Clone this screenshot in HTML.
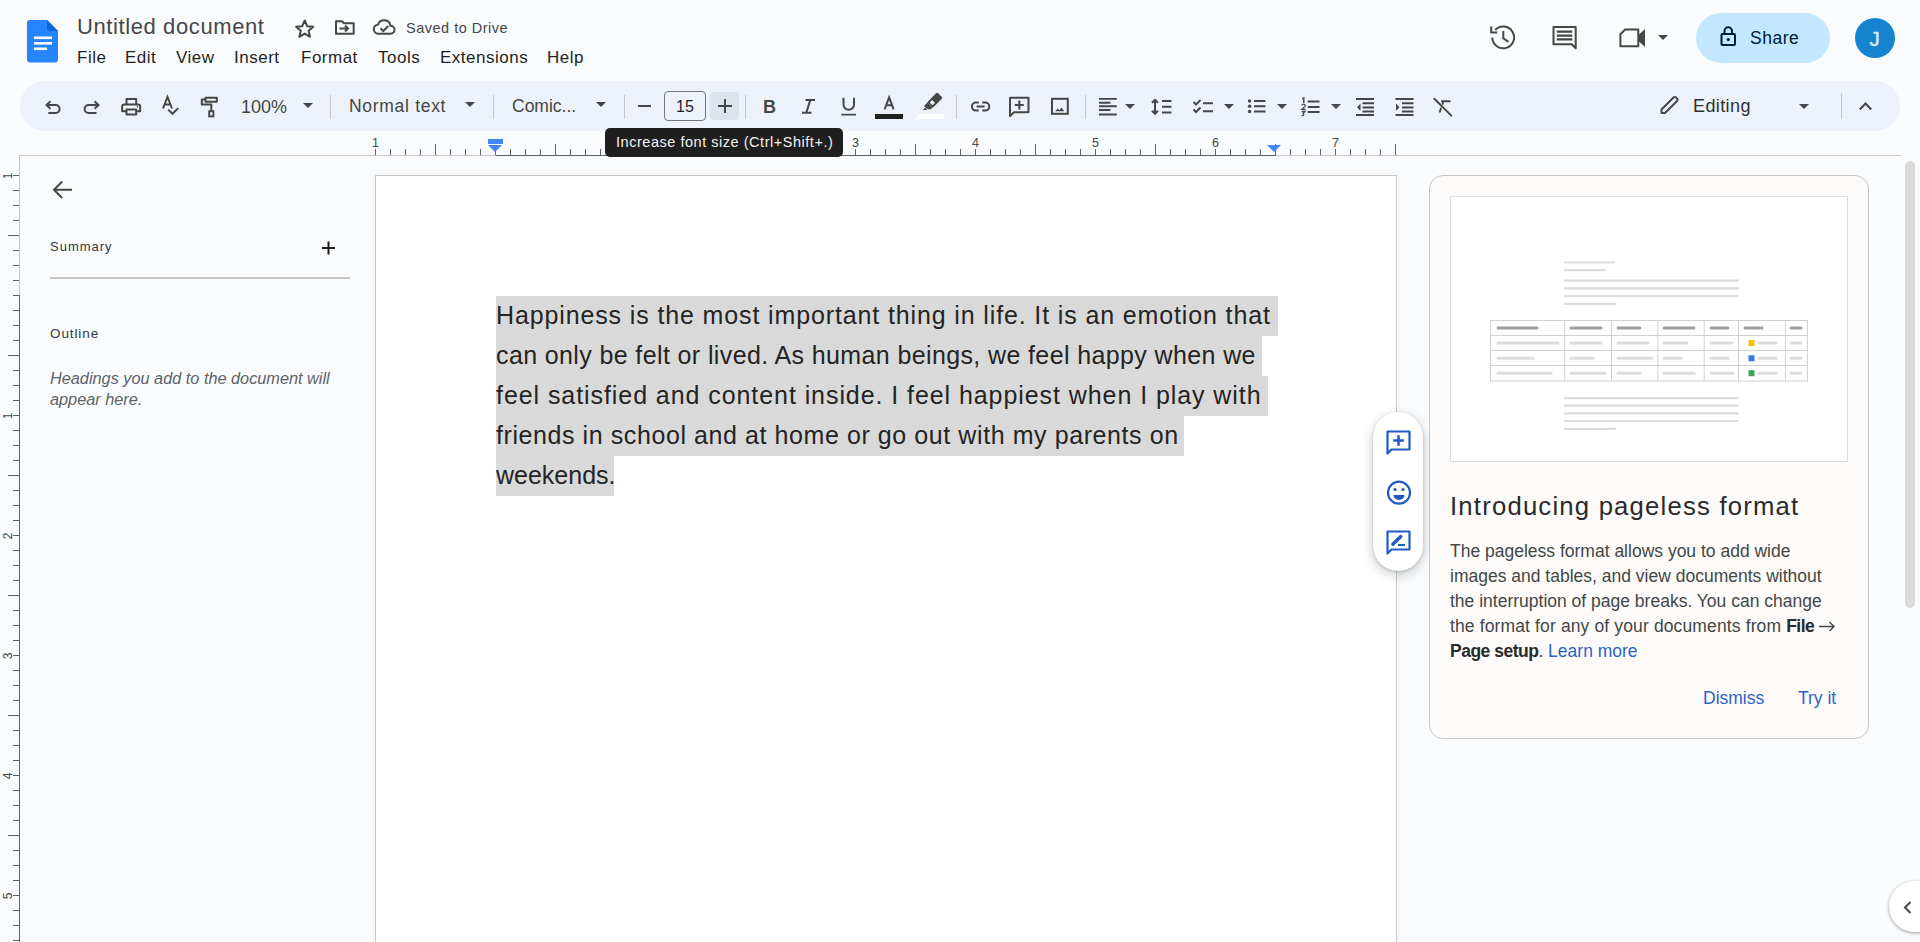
<!DOCTYPE html>
<html><head><meta charset="utf-8">
<style>
*{box-sizing:border-box;margin:0;padding:0}
html,body{width:1920px;height:942px;overflow:hidden;background:#f9fbfd;font-family:"Liberation Sans",sans-serif;color:#1f1f1f}
.a{position:absolute}
svg{position:absolute;overflow:visible}
.t{position:absolute;white-space:nowrap;line-height:1}
.sep{position:absolute;width:1px;background:#c7c7c7;top:95px;height:24px}
.dd{position:absolute;width:0;height:0;border-left:5px solid transparent;border-right:5px solid transparent;border-top:5px solid #444746}
.ic{fill:none;stroke:#444746;stroke-width:2}
.menu{top:49px;font-size:17px;color:#1f1f1f;letter-spacing:0.5px}
.tb{font-size:17px;color:#444746}
</style></head>
<body>
<!-- ===== HEADER ===== -->
<svg style="left:27px;top:20px" width="32" height="43" viewBox="0 0 32 43">
  <path d="M3 0H20L31 11V39.5A3 3 0 0 1 28 42.5H3A3 3 0 0 1 0 39.5V3A3 3 0 0 1 3 0Z" fill="#2684fc"/>
  <path d="M20 0L31 11H23A3 3 0 0 1 20 8Z" fill="#0066da"/>
  <rect x="7" y="16.5" width="18" height="2.6" fill="#fff"/>
  <rect x="7" y="22" width="18" height="2.6" fill="#fff"/>
  <rect x="7" y="27.5" width="13" height="2.6" fill="#fff"/>
</svg>
<div class="t" style="left:77px;top:16px;font-size:22px;color:#474747;letter-spacing:0.6px">Untitled document</div>
<!-- star -->
<svg style="left:0;top:0" width="1" height="1"><path class="ic" d="M304.7 20.5L307.2 26.2L313.3 26.7L308.6 30.8L310 36.8L304.7 33.6L299.4 36.8L300.8 30.8L296.1 26.7L302.2 26.2Z" stroke-width="2" stroke-linejoin="round"/></svg>
<!-- folder move -->
<svg style="left:0;top:0" width="1" height="1"><path class="ic" d="M336 21.3H342L344 23.3H353.7V33.7H336Z" stroke-width="1.8" stroke-linejoin="round"/><path class="ic" d="M339.5 28.5H348M345 25.5L348 28.5L345 31.5" stroke-width="1.8"/></svg>
<!-- cloud done -->
<svg style="left:0;top:0" width="1" height="1"><path class="ic" d="M379 33.7H390.5A4 4 0 0 0 390.5 25.7A6.5 6.5 0 0 0 378 24.5A4.6 4.6 0 0 0 379 33.7Z" stroke-width="2"/><path class="ic" d="M380.5 28.3L383.3 31L388.3 26" stroke-width="1.8"/></svg>
<div class="t" style="left:406px;top:21px;font-size:14.5px;color:#444746;letter-spacing:0.5px">Saved to Drive</div>

<div class="t menu" style="left:77px">File</div>
<div class="t menu" style="left:125px">Edit</div>
<div class="t menu" style="left:176px">View</div>
<div class="t menu" style="left:234px">Insert</div>
<div class="t menu" style="left:301px">Format</div>
<div class="t menu" style="left:378px">Tools</div>
<div class="t menu" style="left:440px">Extensions</div>
<div class="t menu" style="left:547px">Help</div>

<!-- history -->
<svg style="left:0;top:0" width="1" height="1">
 <path class="ic" d="M1492.3 37.6A10.9 10.9 0 1 0 1495.2 30" stroke-width="2.5"/>
 <path class="ic" d="M1491.2 26.6V32.6H1497.2" stroke-width="2.5"/>
 <path class="ic" d="M1503.3 31V38.3L1508.5 41.8" stroke-width="2.5"/>
</svg>
<!-- comments -->
<svg style="left:0;top:0" width="1" height="1">
 <path class="ic" d="M1553.5 26.9H1575.7V48.2L1571.8 44.2H1553.5Z" stroke-width="2.5" stroke-linejoin="round"/>
 <path d="M1556.8 30.5H1572.3V32.8H1556.8ZM1556.8 34.4H1572.3V36.7H1556.8ZM1556.8 38.3H1572.3V40.6H1556.8Z" fill="#444746"/>
</svg>
<!-- meet -->
<svg style="left:0;top:0" width="1" height="1">
 <path class="ic" d="M1625 29.6H1638.3V46.3H1620.4V34.2Z" stroke-width="2.5" stroke-linejoin="round"/>
 <path d="M1638 35.5L1645 29V47L1638 40.5Z" fill="#444746"/>
</svg>
<div class="dd" style="left:1658px;top:35px"></div>
<!-- share -->
<div class="a" style="left:1696px;top:12.5px;width:134px;height:50px;border-radius:25px;background:#c2e7ff"></div>
<svg style="left:0;top:0" width="1" height="1">
 <rect x="1721.5" y="34" width="13.5" height="11" rx="1" class="ic" stroke="#001d35" style="stroke:#001d35" stroke-width="2"/>
 <path d="M1724.5 34V31A3.75 3.75 0 0 1 1732 31V34" class="ic" style="stroke:#001d35" stroke-width="2"/>
 <circle cx="1728.3" cy="39.5" r="1.6" fill="#001d35"/>
</svg>
<div class="t" style="left:1750px;top:29.5px;font-size:17.5px;color:#001d35;letter-spacing:0.5px">Share</div>
<div class="a" style="left:1855px;top:18px;width:40px;height:40px;border-radius:50%;background:#1683d0"></div>
<div class="t" style="left:1869.5px;top:29px;font-size:20.5px;color:#d3ebfb;-webkit-text-stroke:0.5px #d3ebfb">J</div>

<!-- ===== TOOLBAR ===== -->
<div class="a" style="left:20px;top:81px;width:1880px;height:50px;border-radius:25px;background:#edf2fa"></div>
<!-- undo -->
<svg style="left:0;top:0" width="1" height="1"><path class="ic" d="M50.4 101.2L46.5 105L50.4 108.8M46.5 105H55.6A4 4 0 0 1 55.6 113H48.3" stroke-width="1.9"/></svg>
<!-- redo -->
<svg style="left:0;top:0" width="1" height="1"><path class="ic" d="M94.6 101.2L98.5 105L94.6 108.8M98.5 105H88.6A4 4 0 0 0 88.6 113H96.5" stroke-width="1.9"/></svg>
<!-- print -->
<svg style="left:0;top:0" width="1" height="1">
 <path class="ic" d="M126.5 104.4V99H136.2V104.4M126.5 111.3H122.2V106.4A2 2 0 0 1 124.2 104.4H138.2A2 2 0 0 1 140.2 106.4V111.3H136.2M126.5 109.6H136.2V114.4H126.5Z" stroke-width="1.9" stroke-linejoin="round"/>
 <circle cx="137.5" cy="106.8" r="0.8" fill="#444746"/>
</svg>
<!-- spellcheck -->
<svg style="left:0;top:0" width="1" height="1">
 <path class="ic" d="M163 108.5L167.5 97L172 108.5M164.5 104.5H170.5" stroke-width="1.8"/>
 <path class="ic" d="M168.2 109.6L172.5 113.8L178.2 108.1" stroke-width="1.9"/>
</svg>
<!-- paint format -->
<svg style="left:0;top:0" width="1" height="1">
 <path class="ic" d="M205.5 97.7H216.8V101.7H205.5Z M205.5 99.6H201.8V104.5H211.3V111" stroke-width="1.9" stroke-linejoin="round"/>
 <rect x="209.2" y="111.2" width="4.2" height="5.2" fill="none" stroke="#444746" stroke-width="1.9"/>
</svg>
<div class="t tb" style="left:241px;top:98px;font-size:18px">100%</div>
<div class="dd" style="left:303px;top:103px"></div>
<div class="sep" style="left:330px"></div>
<div class="t tb" style="left:349px;top:98px;font-size:17.5px;letter-spacing:0.7px">Normal text</div>
<div class="dd" style="left:465px;top:102px"></div>
<div class="sep" style="left:493px"></div>
<div class="t tb" style="left:512px;top:98px;font-size:17.5px">Comic...</div>
<div class="dd" style="left:596px;top:102px"></div>
<div class="sep" style="left:624px"></div>
<div class="a" style="left:637.5px;top:105px;width:13.5px;height:2px;background:#444746"></div>
<div class="a" style="left:664px;top:91px;width:42px;height:30px;border:1px solid #747775;border-radius:4px"></div>
<div class="t tb" style="left:676px;top:99px;font-size:16px;color:#1f1f1f">15</div>
<div class="a" style="left:710px;top:92px;width:29px;height:28px;border-radius:4px;background:#dde3ea"></div>
<div class="a" style="left:717.5px;top:105px;width:14px;height:2px;background:#444746"></div>
<div class="a" style="left:723.5px;top:99px;width:2px;height:14px;background:#444746"></div>
<div class="sep" style="left:745px"></div>
<div class="t tb" style="left:763px;top:98px;font-size:18px;font-weight:bold">B</div>
<svg style="left:0;top:0" width="1" height="1"><path class="ic" d="M805.5 99.9H815M802 112.8H811.5M810.3 99.9L806.3 112.8" stroke-width="2.1"/></svg>
<svg style="left:0;top:0" width="1" height="1"><path class="ic" d="M843.5 97.8V104.6A5.25 5.25 0 0 0 854 104.6V97.8" stroke-width="2"/><rect x="841.3" y="113.8" width="14.7" height="1.7" fill="#444746"/></svg>
<svg style="left:0;top:0" width="1" height="1"><path class="ic" d="M884.6 109.3L889.1 97.3L893.6 109.3M886.3 105.2H891.9" stroke-width="2"/></svg>
<div class="a" style="left:875px;top:114px;width:28px;height:4.5px;background:#1f1f1f"></div>
<!-- highlighter -->
<svg style="left:0;top:0" width="1" height="1">
 <g transform="translate(932.5 102.5) rotate(45)">
  <path d="M-4 -9A1.5 1.5 0 0 1 -2.5 -10.5H2.5A1.5 1.5 0 0 1 4 -9V3.5H-4Z" fill="#444746"/>
  <rect x="-2" y="-1.5" width="4" height="3.5" fill="#edf2fa"/>
  <path d="M-3.5 3.5H3.5V6.5L0.5 8.5H-3.5Z" fill="#444746"/>
 </g>
 <path d="M922.5 110.2L925 107.7L927.3 110H922.5Z" fill="#444746"/>
</svg>
<div class="a" style="left:917px;top:114px;width:27px;height:4.5px;background:#fff"></div>
<div class="sep" style="left:956px"></div>
<!-- link -->
<svg style="left:0;top:0" width="1" height="1">
 <path class="ic" d="M978.8 102.6H975.9A4 4 0 0 0 975.9 110.6H978.8M982.2 102.6H985.3A4 4 0 0 1 985.3 110.6H982.2M976.6 106.6H984.6" stroke-width="2"/>
</svg>
<!-- add comment -->
<svg style="left:0;top:0" width="1" height="1">
 <path class="ic" d="M1010 97.8H1028.5V112.3H1014L1010 116Z" stroke-width="1.9" stroke-linejoin="round"/>
 <path class="ic" d="M1019.3 100.5V109.5M1014.8 105H1023.8" stroke-width="1.9"/>
</svg>
<!-- image -->
<svg style="left:0;top:0" width="1" height="1">
 <rect x="1052" y="98.8" width="15.8" height="15" class="ic" stroke-width="1.9"/>
 <path d="M1055.3 111.3L1057.6 108.4L1059.3 110.3L1061.5 107.5L1064.3 111.3Z" fill="#444746"/>
</svg>
<div class="sep" style="left:1085px"></div>
<!-- align left -->
<svg style="left:0;top:0" width="1" height="1">
 <path d="M1099 97.9H1116.8V99.8H1099ZM1099 101.8H1110.5V103.7H1099ZM1099 105.3H1116.8V107.2H1099ZM1099 109.1H1110.5V111H1099ZM1099 113.5H1116.8V115.4H1099Z" fill="#444746"/>
</svg>
<div class="dd" style="left:1125px;top:104px"></div>
<!-- line spacing -->
<svg style="left:0;top:0" width="1" height="1">
 <path class="ic" d="M1155 100V113.5M1152 102.8L1155 99.8L1158 102.8M1152 110.8L1155 113.8L1158 110.8" stroke-width="1.9"/>
 <path d="M1162 100H1171.5V102H1162ZM1162 105.8H1171.5V107.8H1162ZM1162 111.6H1171.5V113.6H1162Z" fill="#444746"/>
</svg>
<!-- checklist -->
<svg style="left:0;top:0" width="1" height="1">
 <path class="ic" d="M1193.5 102L1196 104.5L1200.5 100M1193.5 109.5L1196 112L1200.5 107.5" stroke-width="1.9"/>
 <path d="M1203 102.3H1213V104.3H1203ZM1203 110.3H1213V112.3H1203Z" fill="#444746"/>
</svg>
<div class="dd" style="left:1223.5px;top:104px"></div>
<!-- bulleted -->
<svg style="left:0;top:0" width="1" height="1">
 <circle cx="1249.6" cy="100.9" r="1.75" fill="#444746"/><circle cx="1249.6" cy="106.3" r="1.75" fill="#444746"/><circle cx="1249.6" cy="111.6" r="1.75" fill="#444746"/>
 <path d="M1254 99.9H1265.5V101.9H1254ZM1254 105.3H1265.5V107.3H1254ZM1254 110.6H1265.5V112.6H1254Z" fill="#444746"/>
</svg>
<div class="dd" style="left:1277px;top:104px"></div>
<!-- numbered -->
<svg style="left:0;top:0" width="1" height="1">
 <path d="M1302.2 98.8L1303.8 98V103" fill="none" stroke="#444746" stroke-width="1.4"/>
 <path d="M1301.9 105.6A1.7 1.4 0 1 1 1305 106.4L1301.9 109.3H1305.6" fill="none" stroke="#444746" stroke-width="1.3"/>
 <path d="M1301.8 111.5H1305L1303.2 113.2A1.3 1.25 0 1 1 1301.6 115.3" fill="none" stroke="#444746" stroke-width="1.3"/>
 <path d="M1307.7 100.6H1319.5V102.6H1307.7ZM1307.7 106H1319.5V108H1307.7ZM1307.7 111.1H1319.5V113.1H1307.7Z" fill="#444746"/>
</svg>
<div class="dd" style="left:1331px;top:104px"></div>
<!-- decrease indent -->
<svg style="left:0;top:0" width="1" height="1">
 <path d="M1356 98H1374V100H1356ZM1362.5 102.2H1374V104.2H1362.5ZM1362.5 106.4H1374V108.4H1362.5ZM1362.5 110.6H1374V112.6H1362.5ZM1356 114H1374V116H1356Z" fill="#444746"/>
 <path d="M1360.5 103.5L1357 107.2L1360.5 111Z" fill="#444746"/>
</svg>
<!-- increase indent -->
<svg style="left:0;top:0" width="1" height="1">
 <path d="M1395.5 98H1413.5V100H1395.5ZM1402 102.2H1413.5V104.2H1402ZM1402 106.4H1413.5V108.4H1402ZM1402 110.6H1413.5V112.6H1402ZM1395.5 114H1413.5V116H1395.5Z" fill="#444746"/>
 <path d="M1396 103.5L1399.5 107.2L1396 111Z" fill="#444746"/>
</svg>
<!-- clear formatting -->
<svg style="left:0;top:0" width="1" height="1">
 <path class="ic" d="M1441.2 101.3H1450.5M1443.3 101.5L1439.6 112.5" stroke-width="2.3"/><path d="M1434.3 98.8L1451.3 115.6" stroke="#edf2fa" stroke-width="3.2"/><path class="ic" d="M1434.3 98.8L1451.3 115.6" stroke-width="2.1" stroke-linecap="round"/>
</svg>
<!-- editing -->
<svg style="left:0;top:0" width="1" height="1">
 <path class="ic" d="M1661.5 112.8V109.5L1673.5 97.5A1.6 1.6 0 0 1 1676 97.5L1677 98.5A1.6 1.6 0 0 1 1677 101L1665 113H1661.5Z" stroke-width="2" stroke-linejoin="round"/>
</svg>
<div class="t tb" style="left:1693px;top:97px;font-size:18px;color:#303133;letter-spacing:0.4px">Editing</div>
<div class="dd" style="left:1799px;top:103.5px"></div>
<div class="sep" style="left:1841px;top:93px;height:26px"></div>
<svg style="left:0;top:0" width="1" height="1"><path class="ic" d="M1859.8 109.5L1865.5 103.5L1871.2 109.5" stroke-width="2"/></svg>

<!-- ===== RULERS ===== -->
<div class="a" style="left:19px;top:155px;width:1882px;height:1px;background:#c7c7c7"></div>
<div class="a" style="left:19px;top:155px;width:1px;height:787px;background:#c7c7c7"></div>
<div class="a" style="left:496px;top:155px;width:780px;height:1px;background:#5f6368"></div>
<div class="a" style="left:19px;top:295px;width:1px;height:647px;background:#5f6368"></div>
<svg style="left:0;top:0" width="1" height="1"><g stroke="#5f6368" stroke-width="1">
<line x1="375.5" y1="149" x2="375.5" y2="155"/>
<line x1="390.5" y1="149" x2="390.5" y2="155"/>
<line x1="405.5" y1="149" x2="405.5" y2="155"/>
<line x1="420.5" y1="149" x2="420.5" y2="155"/>
<line x1="435.5" y1="144" x2="435.5" y2="155"/>
<line x1="450.5" y1="149" x2="450.5" y2="155"/>
<line x1="465.5" y1="149" x2="465.5" y2="155"/>
<line x1="480.5" y1="149" x2="480.5" y2="155"/>
<line x1="495.5" y1="149" x2="495.5" y2="155"/>
<line x1="510.5" y1="149" x2="510.5" y2="155"/>
<line x1="525.5" y1="149" x2="525.5" y2="155"/>
<line x1="540.5" y1="149" x2="540.5" y2="155"/>
<line x1="555.5" y1="144" x2="555.5" y2="155"/>
<line x1="570.5" y1="149" x2="570.5" y2="155"/>
<line x1="585.5" y1="149" x2="585.5" y2="155"/>
<line x1="600.5" y1="149" x2="600.5" y2="155"/>
<line x1="615.5" y1="149" x2="615.5" y2="155"/>
<line x1="630.5" y1="149" x2="630.5" y2="155"/>
<line x1="645.5" y1="149" x2="645.5" y2="155"/>
<line x1="660.5" y1="149" x2="660.5" y2="155"/>
<line x1="675.5" y1="144" x2="675.5" y2="155"/>
<line x1="690.5" y1="149" x2="690.5" y2="155"/>
<line x1="705.5" y1="149" x2="705.5" y2="155"/>
<line x1="720.5" y1="149" x2="720.5" y2="155"/>
<line x1="735.5" y1="149" x2="735.5" y2="155"/>
<line x1="750.5" y1="149" x2="750.5" y2="155"/>
<line x1="765.5" y1="149" x2="765.5" y2="155"/>
<line x1="780.5" y1="149" x2="780.5" y2="155"/>
<line x1="795.5" y1="144" x2="795.5" y2="155"/>
<line x1="810.5" y1="149" x2="810.5" y2="155"/>
<line x1="825.5" y1="149" x2="825.5" y2="155"/>
<line x1="840.5" y1="149" x2="840.5" y2="155"/>
<line x1="855.5" y1="149" x2="855.5" y2="155"/>
<line x1="870.5" y1="149" x2="870.5" y2="155"/>
<line x1="885.5" y1="149" x2="885.5" y2="155"/>
<line x1="900.5" y1="149" x2="900.5" y2="155"/>
<line x1="915.5" y1="144" x2="915.5" y2="155"/>
<line x1="930.5" y1="149" x2="930.5" y2="155"/>
<line x1="945.5" y1="149" x2="945.5" y2="155"/>
<line x1="960.5" y1="149" x2="960.5" y2="155"/>
<line x1="975.5" y1="149" x2="975.5" y2="155"/>
<line x1="990.5" y1="149" x2="990.5" y2="155"/>
<line x1="1005.5" y1="149" x2="1005.5" y2="155"/>
<line x1="1020.5" y1="149" x2="1020.5" y2="155"/>
<line x1="1035.5" y1="144" x2="1035.5" y2="155"/>
<line x1="1050.5" y1="149" x2="1050.5" y2="155"/>
<line x1="1065.5" y1="149" x2="1065.5" y2="155"/>
<line x1="1080.5" y1="149" x2="1080.5" y2="155"/>
<line x1="1095.5" y1="149" x2="1095.5" y2="155"/>
<line x1="1110.5" y1="149" x2="1110.5" y2="155"/>
<line x1="1125.5" y1="149" x2="1125.5" y2="155"/>
<line x1="1140.5" y1="149" x2="1140.5" y2="155"/>
<line x1="1155.5" y1="144" x2="1155.5" y2="155"/>
<line x1="1170.5" y1="149" x2="1170.5" y2="155"/>
<line x1="1185.5" y1="149" x2="1185.5" y2="155"/>
<line x1="1200.5" y1="149" x2="1200.5" y2="155"/>
<line x1="1215.5" y1="149" x2="1215.5" y2="155"/>
<line x1="1230.5" y1="149" x2="1230.5" y2="155"/>
<line x1="1245.5" y1="149" x2="1245.5" y2="155"/>
<line x1="1260.5" y1="149" x2="1260.5" y2="155"/>
<line x1="1275.5" y1="144" x2="1275.5" y2="155"/>
<line x1="1290.5" y1="149" x2="1290.5" y2="155"/>
<line x1="1305.5" y1="149" x2="1305.5" y2="155"/>
<line x1="1320.5" y1="149" x2="1320.5" y2="155"/>
<line x1="1335.5" y1="149" x2="1335.5" y2="155"/>
<line x1="1350.5" y1="149" x2="1350.5" y2="155"/>
<line x1="1365.5" y1="149" x2="1365.5" y2="155"/>
<line x1="1380.5" y1="149" x2="1380.5" y2="155"/>
<line x1="1395.5" y1="144" x2="1395.5" y2="155"/>
</g><g stroke="#5f6368" stroke-width="1">
<line x1="13" y1="175.5" x2="19" y2="175.5"/>
<line x1="13" y1="190.5" x2="19" y2="190.5"/>
<line x1="13" y1="205.5" x2="19" y2="205.5"/>
<line x1="13" y1="220.5" x2="19" y2="220.5"/>
<line x1="8" y1="235.5" x2="19" y2="235.5"/>
<line x1="13" y1="250.5" x2="19" y2="250.5"/>
<line x1="13" y1="265.5" x2="19" y2="265.5"/>
<line x1="13" y1="280.5" x2="19" y2="280.5"/>
<line x1="13" y1="295.5" x2="19" y2="295.5"/>
<line x1="13" y1="310.5" x2="19" y2="310.5"/>
<line x1="13" y1="325.5" x2="19" y2="325.5"/>
<line x1="13" y1="340.5" x2="19" y2="340.5"/>
<line x1="8" y1="355.5" x2="19" y2="355.5"/>
<line x1="13" y1="370.5" x2="19" y2="370.5"/>
<line x1="13" y1="385.5" x2="19" y2="385.5"/>
<line x1="13" y1="400.5" x2="19" y2="400.5"/>
<line x1="13" y1="415.5" x2="19" y2="415.5"/>
<line x1="13" y1="430.5" x2="19" y2="430.5"/>
<line x1="13" y1="445.5" x2="19" y2="445.5"/>
<line x1="13" y1="460.5" x2="19" y2="460.5"/>
<line x1="8" y1="475.5" x2="19" y2="475.5"/>
<line x1="13" y1="490.5" x2="19" y2="490.5"/>
<line x1="13" y1="505.5" x2="19" y2="505.5"/>
<line x1="13" y1="520.5" x2="19" y2="520.5"/>
<line x1="13" y1="535.5" x2="19" y2="535.5"/>
<line x1="13" y1="550.5" x2="19" y2="550.5"/>
<line x1="13" y1="565.5" x2="19" y2="565.5"/>
<line x1="13" y1="580.5" x2="19" y2="580.5"/>
<line x1="8" y1="595.5" x2="19" y2="595.5"/>
<line x1="13" y1="610.5" x2="19" y2="610.5"/>
<line x1="13" y1="625.5" x2="19" y2="625.5"/>
<line x1="13" y1="640.5" x2="19" y2="640.5"/>
<line x1="13" y1="655.5" x2="19" y2="655.5"/>
<line x1="13" y1="670.5" x2="19" y2="670.5"/>
<line x1="13" y1="685.5" x2="19" y2="685.5"/>
<line x1="13" y1="700.5" x2="19" y2="700.5"/>
<line x1="8" y1="715.5" x2="19" y2="715.5"/>
<line x1="13" y1="730.5" x2="19" y2="730.5"/>
<line x1="13" y1="745.5" x2="19" y2="745.5"/>
<line x1="13" y1="760.5" x2="19" y2="760.5"/>
<line x1="13" y1="775.5" x2="19" y2="775.5"/>
<line x1="13" y1="790.5" x2="19" y2="790.5"/>
<line x1="13" y1="805.5" x2="19" y2="805.5"/>
<line x1="13" y1="820.5" x2="19" y2="820.5"/>
<line x1="8" y1="835.5" x2="19" y2="835.5"/>
<line x1="13" y1="850.5" x2="19" y2="850.5"/>
<line x1="13" y1="865.5" x2="19" y2="865.5"/>
<line x1="13" y1="880.5" x2="19" y2="880.5"/>
<line x1="13" y1="895.5" x2="19" y2="895.5"/>
<line x1="13" y1="910.5" x2="19" y2="910.5"/>
<line x1="13" y1="925.5" x2="19" y2="925.5"/>
<line x1="13" y1="940.5" x2="19" y2="940.5"/>
</g></svg>
<div class="t" style="left:372px;top:136.5px;font-size:12.5px;color:#444746">1</div>
<div class="t" style="left:612px;top:136.5px;font-size:12.5px;color:#444746">1</div>
<div class="t" style="left:732px;top:136.5px;font-size:12.5px;color:#444746">2</div>
<div class="t" style="left:852px;top:136.5px;font-size:12.5px;color:#444746">3</div>
<div class="t" style="left:972px;top:136.5px;font-size:12.5px;color:#444746">4</div>
<div class="t" style="left:1092px;top:136.5px;font-size:12.5px;color:#444746">5</div>
<div class="t" style="left:1212px;top:136.5px;font-size:12.5px;color:#444746">6</div>
<div class="t" style="left:1332px;top:136.5px;font-size:12.5px;color:#444746">7</div>
<!-- indent markers -->
<div class="a" style="left:488px;top:139px;width:15px;height:4.5px;background:#4285f4"></div>
<div class="a" style="left:488px;top:144.5px;width:0;height:0;border-left:7.5px solid transparent;border-right:7.5px solid transparent;border-top:7px solid #4285f4"></div>
<div class="a" style="left:1267px;top:144.5px;width:0;height:0;border-left:7.5px solid transparent;border-right:7.5px solid transparent;border-top:7px solid #4285f4"></div>
<!-- left ruler labels (rotated) -->
<div class="t" style="left:5px;top:170px;font-size:12px;color:#444746;transform:rotate(-90deg)">1</div>
<div class="t" style="left:5px;top:410px;font-size:12px;color:#444746;transform:rotate(-90deg)">1</div>
<div class="t" style="left:5px;top:530px;font-size:12px;color:#444746;transform:rotate(-90deg)">2</div>
<div class="t" style="left:5px;top:650px;font-size:12px;color:#444746;transform:rotate(-90deg)">3</div>
<div class="t" style="left:5px;top:770px;font-size:12px;color:#444746;transform:rotate(-90deg)">4</div>
<div class="t" style="left:5px;top:890px;font-size:12px;color:#444746;transform:rotate(-90deg)">5</div>

<!-- tooltip -->
<div class="a" style="left:605px;top:128px;width:238px;height:28.5px;border-radius:5px;background:#1f1f1f"></div>
<div class="t" style="left:616px;top:135px;font-size:14.5px;color:#f2f2f2;letter-spacing:0.53px">Increase font size (Ctrl+Shift+.)</div>

<!-- ===== LEFT SIDEBAR ===== -->
<svg style="left:0;top:0" width="1" height="1"><path class="ic" d="M72 189.8H54.5M62.2 181.5L54 189.8L62.2 198" stroke-width="2.1"/></svg>
<div class="t" style="left:50px;top:240px;font-size:13px;color:#35383b;letter-spacing:1px">Summary</div>
<svg style="left:0;top:0" width="1" height="1"><path class="ic" d="M328.5 241.5V254.5M322 248H335" stroke="#1f1f1f" style="stroke:#1f1f1f" stroke-width="2"/></svg>
<div class="a" style="left:50px;top:277px;width:300px;height:1.5px;background:#c7c7c7"></div>
<div class="t" style="left:50px;top:327px;font-size:13.5px;color:#35383b;letter-spacing:0.9px">Outline</div>
<div class="t" style="left:50px;top:368px;font-size:16.3px;line-height:20.6px;color:#5f6368;font-style:italic;white-space:normal;width:300px">Headings you add to the document will<br>appear here.</div>

<!-- ===== PAGE ===== -->
<div class="a" style="left:375px;top:175px;width:1022px;height:800px;background:#fff;border:1px solid #c7c7c7;box-shadow:0 0 7px rgba(60,60,60,.05)"></div>
<div id="doc" class="a" style="left:496px;top:296px;font-size:25px;color:#242424">
 <div class="a" style="left:0;top:0;width:782px;height:40px;background:#d9d9d9"></div>
 <div class="a" style="left:0;top:40px;width:766px;height:40px;background:#d9d9d9"></div>
 <div class="a" style="left:0;top:80px;width:772px;height:40px;background:#d9d9d9"></div>
 <div class="a" style="left:0;top:120px;width:688px;height:40px;background:#d9d9d9"></div>
 <div class="a" style="left:0;top:160px;width:118px;height:40px;background:#d9d9d9"></div>
 <div class="t dl" style="left:0;top:6.5px;letter-spacing:0.87px">Happiness is the most important thing in life. It is an emotion that</div>
 <div class="t dl" style="left:0;top:46.5px;letter-spacing:0.38px">can only be felt or lived. As human beings, we feel happy when we</div>
 <div class="t dl" style="left:0;top:86.5px;letter-spacing:0.93px">feel satisfied and content inside. I feel happiest when I play with</div>
 <div class="t dl" style="left:0;top:126.5px;letter-spacing:0.58px">friends in school and at home or go out with my parents on</div>
 <div class="t dl" style="left:0;top:166.5px">weekends.</div>
</div>
<!-- floating pill -->
<div class="a" style="left:1373px;top:412px;width:50px;height:159px;border-radius:25px;background:#fff;box-shadow:0 1px 3px rgba(60,64,67,.3),0 4px 8px 3px rgba(60,64,67,.15)"></div>
<svg style="left:0;top:0" width="1" height="1">
 <path d="M1387.5 431.5H1409.5V449.5H1391.5L1387.5 453.5Z" fill="none" stroke="#1f5ac4" stroke-width="2.2" stroke-linejoin="round"/>
 <path d="M1398.5 435.2V445.8M1393.2 440.5H1403.8" fill="none" stroke="#1f5ac4" stroke-width="2.5"/>
 <circle cx="1399" cy="492.7" r="11" fill="none" stroke="#1f5ac4" stroke-width="2.2"/>
 <circle cx="1395" cy="489.5" r="1.6" fill="#1f5ac4"/><circle cx="1403" cy="489.5" r="1.6" fill="#1f5ac4"/>
 <path d="M1393.5 495H1404.5A5.5 5 0 0 1 1393.5 495Z" fill="#1f5ac4"/>
 <path d="M1387.5 531.5H1409.5V549.5H1391.5L1387.5 553.5Z" fill="none" stroke="#1f5ac4" stroke-width="2.2" stroke-linejoin="round"/>
 <path d="M1392.8 544.2L1400.8 536.6" stroke="#1f5ac4" stroke-width="3.4" stroke-linecap="round"/>
 <path d="M1398 545H1405" stroke="#1f5ac4" stroke-width="2"/>
</svg>

<!-- ===== RIGHT CARD ===== -->
<div class="a" style="left:1429px;top:175px;width:440px;height:564px;border-radius:14px;background:#fcfbfa;border:1px solid #c7c7c7"></div>
<div class="a" style="left:1450px;top:196px;width:398px;height:266px;background:#fff;border:1px solid #dadce0"></div>
<svg style="left:0;top:0" width="1" height="1">
 <g stroke="#dadce0" stroke-width="2.2" stroke-linecap="round">
  <line x1="1565" y1="262.5" x2="1614" y2="262.5"/>
  <line x1="1565" y1="270.2" x2="1605" y2="270.2"/>
  <line x1="1565" y1="280.6" x2="1738" y2="280.6"/>
  <line x1="1565" y1="288.3" x2="1738" y2="288.3"/>
  <line x1="1565" y1="296" x2="1738" y2="296"/>
  <line x1="1565" y1="303.8" x2="1615" y2="303.8"/>
  <line x1="1565" y1="398.2" x2="1738" y2="398.2"/>
  <line x1="1565" y1="405.6" x2="1738" y2="405.6"/>
  <line x1="1565" y1="413.3" x2="1738" y2="413.3"/>
  <line x1="1565" y1="421" x2="1738" y2="421"/>
  <line x1="1565" y1="428.8" x2="1615" y2="428.8"/>
 </g>
 <g stroke="#c4c7c5" stroke-width="0.8" fill="none">
  <rect x="1490.5" y="320.5" width="317" height="60.5"/>
  <line x1="1490.5" y1="335.5" x2="1807.5" y2="335.5"/>
  <line x1="1490.5" y1="350.5" x2="1807.5" y2="350.5"/>
  <line x1="1490.5" y1="365.5" x2="1807.5" y2="365.5"/>
  <line x1="1564.7" y1="320.5" x2="1564.7" y2="381"/>
  <line x1="1611.5" y1="320.5" x2="1611.5" y2="381"/>
  <line x1="1657.8" y1="320.5" x2="1657.8" y2="381"/>
  <line x1="1704.2" y1="320.5" x2="1704.2" y2="381"/>
  <line x1="1738.5" y1="320.5" x2="1738.5" y2="381"/>
  <line x1="1785.4" y1="320.5" x2="1785.4" y2="381"/>
 </g>
 <g stroke="#9aa0a6" stroke-width="3" stroke-linecap="round">
  <line x1="1498" y1="328" x2="1537" y2="328"/>
  <line x1="1571" y1="328" x2="1601" y2="328"/>
  <line x1="1618" y1="328" x2="1640" y2="328"/>
  <line x1="1664" y1="328" x2="1694" y2="328"/>
  <line x1="1711" y1="328" x2="1728" y2="328"/>
  <line x1="1745" y1="328" x2="1762" y2="328"/>
  <line x1="1791" y1="328" x2="1801" y2="328"/>
 </g>
 <g stroke="#dadce0" stroke-width="3" stroke-linecap="round">
  <line x1="1498" y1="343" x2="1558" y2="343"/>
  <line x1="1571" y1="343" x2="1601" y2="343"/>
  <line x1="1618" y1="343" x2="1648" y2="343"/>
  <line x1="1664" y1="343" x2="1687" y2="343"/>
  <line x1="1711" y1="343" x2="1732" y2="343"/>
  <line x1="1759" y1="343" x2="1776" y2="343"/>
  <line x1="1791" y1="343" x2="1801" y2="343"/>
  <line x1="1498" y1="358.3" x2="1533" y2="358.3"/>
  <line x1="1571" y1="358.3" x2="1593" y2="358.3"/>
  <line x1="1618" y1="358.3" x2="1652" y2="358.3"/>
  <line x1="1664" y1="358.3" x2="1681" y2="358.3"/>
  <line x1="1711" y1="358.3" x2="1728" y2="358.3"/>
  <line x1="1759" y1="358.3" x2="1776" y2="358.3"/>
  <line x1="1791" y1="358.3" x2="1801" y2="358.3"/>
  <line x1="1498" y1="373.2" x2="1551" y2="373.2"/>
  <line x1="1571" y1="373.2" x2="1605" y2="373.2"/>
  <line x1="1618" y1="373.2" x2="1640" y2="373.2"/>
  <line x1="1664" y1="373.2" x2="1694" y2="373.2"/>
  <line x1="1711" y1="373.2" x2="1733" y2="373.2"/>
  <line x1="1759" y1="373.2" x2="1776" y2="373.2"/>
  <line x1="1791" y1="373.2" x2="1801" y2="373.2"/>
 </g>
 <rect x="1748.5" y="340" width="6" height="6" fill="#fbbc04"/>
 <rect x="1748.5" y="355.3" width="6" height="6" fill="#3b78e7"/>
 <rect x="1748.5" y="370.2" width="6" height="6" fill="#34a853"/>
</svg>
<div class="t" style="left:1450px;top:493.5px;font-size:25.7px;color:#2a2a2a;letter-spacing:1.2px">Introducing pageless format</div>
<div class="a" style="left:1450px;top:538.8px;font-size:17.5px;line-height:25px;color:#444746;white-space:nowrap">
<div>The pageless format allows you to add wide</div>
<div>images and tables, and view documents without</div>
<div>the interruption of page breaks. You can change</div>
<div><span style="letter-spacing:0.13px">the format for any of your documents from </span><b style="color:#2a2a2a;letter-spacing:-0.5px">File</b><svg style="position:relative;display:inline-block;vertical-align:baseline" width="22" height="12" viewBox="0 0 22 12"><path d="M5 6.5H20M15.5 2L20 6.5L15.5 11" fill="none" stroke="#444746" stroke-width="1.4"/></svg></div>
<div><b style="color:#2a2a2a;letter-spacing:-0.5px">Page setup</b>. <span style="color:#2f63c4">Learn more</span></div>
</div>
<div class="t" style="left:1703px;top:689px;font-size:17.5px;color:#2f63c4;margin-top:0.7px">Dismiss</div>
<div class="t" style="left:1798px;top:689px;font-size:17.5px;color:#2f63c4;margin-top:0.7px">Try it</div>

<!-- scrollbar -->
<div class="a" style="left:1905px;top:161px;width:10px;height:447px;border-radius:5px;background:#dadada"></div>
<!-- collapse button -->
<div class="a" style="left:1889px;top:881px;width:60px;height:51px;border-radius:25.5px;background:#fff;box-shadow:0 1px 3px rgba(60,64,67,.3),0 1px 3px 1px rgba(60,64,67,.15)"></div>
<svg style="left:0;top:0" width="1" height="1"><path class="ic" d="M1910.5 902L1905 907.5L1910.5 913" stroke-width="2"/></svg>
</body></html>
